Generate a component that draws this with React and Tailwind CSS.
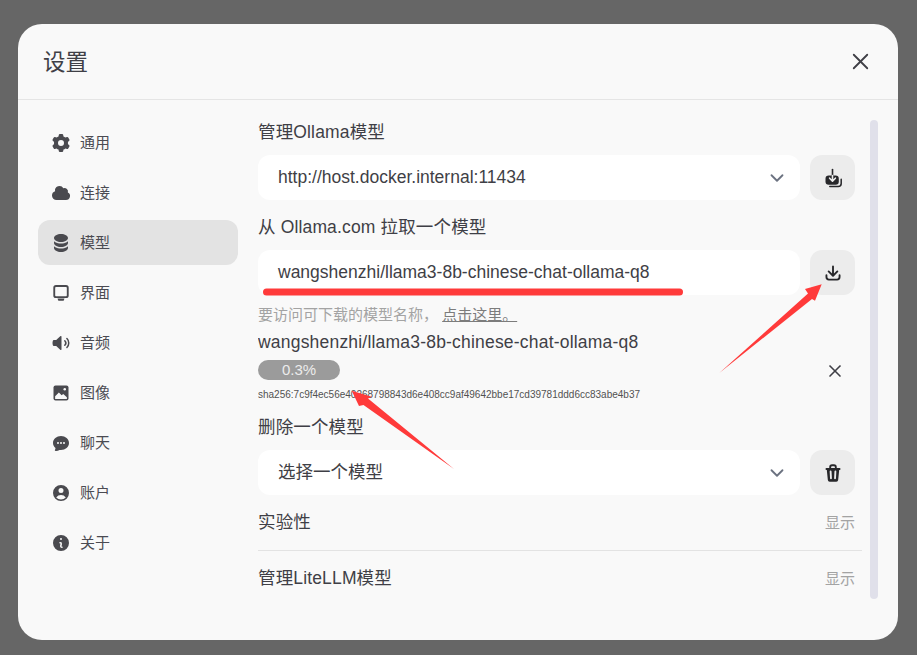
import {
  HiMiniCog6Tooth,
  HiMiniCloud,
  HiMiniCircleStack,
  HiMiniSpeakerWave,
  HiMiniChatBubbleOvalLeftEllipsis,
  HiMiniUserCircle,
  HiMiniInformationCircle,
} from 'react-icons/hi2';
import { ChevronDown, X } from 'lucide-react';

function MonitorIcon({ className }) {
  return (
    <svg viewBox="0 0 16 16" className={className}>
      <rect x="2.6" y="2.4" width="10.8" height="8.9" rx="1.4" fill="none" stroke="currentColor" strokeWidth="1.5" />
      <path d="M5.2 12.4h5.6l-.6 1.5a.6.6 0 0 1-.5.3H6.3a.6.6 0 0 1-.5-.3l-.6-1.5Z" fill="currentColor" />
    </svg>
  );
}

function PhotoIcon({ className }) {
  return (
    <svg viewBox="0 0 16 16" className={className}>
      <rect x="2" y="2" width="12" height="12" rx="1.6" fill="currentColor" />
      <path d="M3.3 12.8v-2.3l3-2.9 2.2 2.1 1.3-1 2.9 2.6v1.5Z" fill="#f9f9f9" />
      <circle cx="11" cy="5" r="1" fill="#f9f9f9" />
    </svg>
  );
}

const navItems = [
  { label: '通用', icon: HiMiniCog6Tooth },
  { label: '连接', icon: HiMiniCloud },
  { label: '模型', icon: HiMiniCircleStack, active: true },
  { label: '界面', icon: MonitorIcon },
  { label: '音频', icon: HiMiniSpeakerWave },
  { label: '图像', icon: PhotoIcon },
  { label: '聊天', icon: HiMiniChatBubbleOvalLeftEllipsis },
  { label: '账户', icon: HiMiniUserCircle },
  { label: '关于', icon: HiMiniInformationCircle },
];

function TrayStackIcon() {
  return (
    <svg viewBox="0 0 20 20" className="w-[20px] h-[20px]">
      <path d="M9.5 1.5V8" stroke="currentColor" strokeWidth="1.6" strokeLinecap="round" fill="none" />
      <rect x="2.5" y="7.5" width="13.3" height="9.2" rx="3.2" fill="currentColor" />
      <path d="M9.5 7.5v5.5M6.6 10.2l2.9 3 2.9-3" stroke="#ececec" strokeWidth="1.6" strokeLinecap="round" strokeLinejoin="round" fill="none" />
      <path d="M6.8 18.5h8.4a3 3 0 0 0 3-3v-4.2" stroke="currentColor" strokeWidth="1.5" strokeLinecap="round" fill="none" />
    </svg>
  );
}

function DownloadIcon() {
  return (
    <svg viewBox="0 0 16 16" fill="currentColor" className="w-[20px] h-[20px]">
      <path d="M8.75 2.75a.75.75 0 0 0-1.5 0v5.69L5.03 6.22a.75.75 0 0 0-1.06 1.06l3.5 3.5a.75.75 0 0 0 1.06 0l3.5-3.5a.75.75 0 0 0-1.06-1.06L8.75 8.44V2.75Z" />
      <path d="M3.5 9.75a.75.75 0 0 0-1.5 0v1.5A2.75 2.75 0 0 0 4.75 14h6.5A2.75 2.75 0 0 0 14 11.25v-1.5a.75.75 0 0 0-1.5 0v1.5c0 .69-.56 1.25-1.25 1.25h-6.5c-.69 0-1.25-.56-1.25-1.25v-1.5Z" />
    </svg>
  );
}

function TrashIcon() {
  return (
    <svg viewBox="0 0 16 16" fill="currentColor" className="w-[20px] h-[20px]">
      <path
        fillRule="evenodd"
        clipRule="evenodd"
        d="M5 3.25V4H2.75a.75.75 0 0 0 0 1.5h.3l.815 8.15A1.5 1.5 0 0 0 5.357 15h5.285a1.5 1.5 0 0 0 1.493-1.35l.815-8.15h.3a.75.75 0 0 0 0-1.5H11v-.75A2.25 2.25 0 0 0 8.75 1h-1.5A2.25 2.25 0 0 0 5 3.25Zm2.25-.75a.75.75 0 0 0-.75.75V4h3v-.75a.75.75 0 0 0-.75-.75h-1.5ZM6.05 6a.75.75 0 0 1 .787.713l.275 5.5a.75.75 0 0 1-1.498.075l-.275-5.5A.75.75 0 0 1 6.05 6Zm3.9 0a.75.75 0 0 1 .712.787l-.275 5.5a.75.75 0 0 1-1.498-.075l.275-5.5a.75.75 0 0 1 .786-.711Z"
      />
    </svg>
  );
}

function Field({ text, chevron, children }) {
  return (
    <div className="flex gap-[10px] pr-[7px]">
      <div className="flex-1 h-[45px] flex items-center justify-between bg-white rounded-[12px] pl-[20px] pr-[12px] text-[17.5px] text-[#3f3f46]">
        <span>{text}</span>
        {chevron && <ChevronDown className="w-[22px] h-[22px] text-[#6b7280]" strokeWidth={2} />}
      </div>
      <button className="w-[45px] h-[45px] flex items-center justify-center bg-[#ececec] rounded-[12px] text-[#27272a]">
        {children}
      </button>
    </div>
  );
}

function CollapsedRow({ title }) {
  return (
    <div className="flex items-center justify-between pr-[7px]">
      <div className="text-[17.5px] leading-[24px] tracking-[0.15px] text-[#3f3f46]">{title}</div>
      <button className="mt-[2px] text-[15px] text-[#a3a3a3]">显示</button>
    </div>
  );
}

export default function App() {
  return (
    <div
      className="relative w-[917px] h-[655px] bg-[#666666] pt-[24px] pl-[18px] overflow-hidden"
      style={{ fontFamily: '"Liberation Sans", "Noto Sans CJK SC", sans-serif' }}
    >
      <div className="w-[880px] h-[616px] bg-[#f9f9f9] rounded-[24px]">
        {/* Header */}
        <div className="h-[76px] flex items-center justify-between pl-[25px] pr-[24px] border-b border-[#e5e5e5]">
          <h1 className="mt-[2px] text-[22.5px] text-[#3f3f46]">设置</h1>
          <button className="text-[#3f3f46]">
            <X className="w-[27px] h-[27px]" strokeWidth={1.6} />
          </button>
        </div>

        <div className="flex pt-[20px] pl-[20px]">
          {/* Sidebar */}
          <nav className="w-[200px] flex flex-col gap-[5px]">
            {navItems.map((item) => {
              const Icon = item.icon;
              return (
                <div
                  key={item.label}
                  className={`h-[45px] flex items-center gap-[9px] pl-[13px] rounded-[12px] text-[15px] text-[#4b4b52] ${
                    item.active ? 'bg-[#e3e3e3]' : ''
                  }`}
                >
                  <Icon className="w-[20px] h-[20px] text-[#4a4a4f]" />
                  <span className="mt-[2px]">{item.label}</span>
                </div>
              );
            })}
          </nav>

          {/* Content */}
          <div className="ml-[20px] w-[604px] h-[480px] overflow-hidden">
            <div className="text-[17.5px] leading-[24px] tracking-[0.15px] text-[#3f3f46]">管理Ollama模型</div>
            <div className="mt-[11px]">
              <Field text="http://host.docker.internal:11434" chevron>
                <TrayStackIcon />
              </Field>
            </div>

            <div className="mt-[15px] text-[17.5px] leading-[24px] tracking-[0.15px] text-[#3f3f46]">从 Ollama.com 拉取一个模型</div>
            <div className="mt-[11px]">
              <Field text="wangshenzhi/llama3-8b-chinese-chat-ollama-q8">
                <DownloadIcon />
              </Field>
            </div>

            <div className="mt-[10px] text-[15px] leading-[20px] text-[#a3a3a3]">
              要访问可下载的模型名称， <a className="underline text-[#7c7c7c]">点击这里。</a>
            </div>

            <div className="flex items-start pr-[17px]">
              <div className="flex-1">
                <div className="mt-[5px] text-[17.5px] leading-[24px] tracking-[0.2px] text-[#3f3f46]">
                  wangshenzhi/llama3-8b-chinese-chat-ollama-q8
                </div>
                <div className="mt-[6px] w-[82px] h-[20px] rounded-full bg-[#9b9b9b] flex items-center justify-center text-[15px] text-[#ececec]">
                  0.3%
                </div>
                <div className="mt-[8px] text-[10px] leading-[14px] text-[#525252]">
                  sha256:7c9f4ec56e40268798843d6e408cc9af49642bbe17cd39781ddd6cc83abe4b37
                </div>
              </div>
              <button className="mt-[36px] text-[#3f3f46]">
                <X className="w-[20px] h-[20px]" strokeWidth={2} />
              </button>
            </div>

            <div className="mt-[13px] text-[17.5px] leading-[24px] tracking-[0.15px] text-[#3f3f46]">删除一个模型</div>
            <div className="mt-[11px]">
              <Field text="选择一个模型" chevron>
                <TrashIcon />
              </Field>
            </div>

            <div className="mt-[15px]">
              <CollapsedRow title="实验性" />
            </div>
            <div className="mt-[15px] border-t border-[#e3e3e3]" />
            <div className="mt-[15px]">
              <CollapsedRow title="管理LiteLLM模型" />
            </div>
          </div>

          {/* Scrollbar */}
          <div className="ml-[8px] w-[8px] h-[479px] rounded-full bg-[#e0e0ea]" />
        </div>
      </div>

      {/* Red annotations drawn over the screenshot */}
      <svg className="absolute inset-0 pointer-events-none" width="917" height="655" viewBox="0 0 917 655">
        <path d="M266.5 292 L679.5 292" stroke="#ff3a3a" strokeWidth="7" strokeLinecap="round" fill="none" />
        <polygon points="719.3,373 808,293.5 805,289 821.7,284.3 815,300.7 812,299" fill="#ff3a3a" />
        <polygon points="454,469 368,398.5 371.7,396.7 351.7,390.7 359,406 363.5,405" fill="#ff3a3a" />
      </svg>
    </div>
  );
}
